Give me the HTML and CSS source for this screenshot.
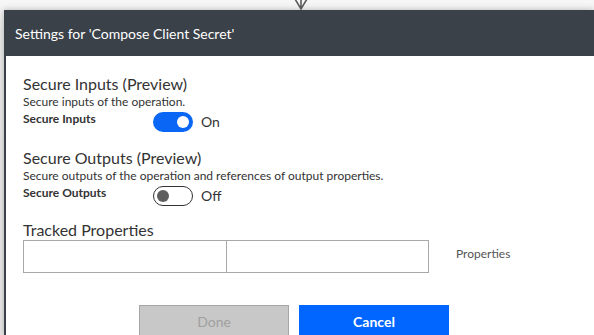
FILE: index.html
```html
<!DOCTYPE html>
<html>
<head>
<meta charset="utf-8">
<link rel="stylesheet" href="styles.css">
</head>
<body>
<div class="canvas">
  <svg class="connector" width="16" height="11" viewBox="0 0 16 11">
    <path d="M2 -1 L8 9 L14 -1 M8 -1 L8 9" fill="none" stroke="#5a5a5a" stroke-width="1.6"/>
  </svg>
  <div class="dialog">
    <div class="dialog-header">Settings for 'Compose Client Secret'</div>
    <div class="dialog-body">
      <section class="section">
        <div class="section-title">Secure Inputs (Preview)</div>
        <div class="section-desc">Secure inputs of the operation.</div>
        <div class="setting-row">
          <div class="setting-label">Secure Inputs</div>
          <div class="toggle toggle-on"><span class="knob"></span></div>
          <div class="toggle-text">On</div>
        </div>
      </section>
      <section class="section">
        <div class="section-title">Secure Outputs (Preview)</div>
        <div class="section-desc">Secure outputs of the operation and references of output properties.</div>
        <div class="setting-row">
          <div class="setting-label">Secure Outputs</div>
          <div class="toggle toggle-off"><span class="knob"></span></div>
          <div class="toggle-text">Off</div>
        </div>
      </section>
      <section class="section tracked">
        <div class="section-title">Tracked Properties</div>
        <div class="tracked-row">
          <div class="kv-box">
            <div class="kv-cell kv-key"></div>
            <div class="kv-cell"></div>
          </div>
          <div class="kv-hint">Properties</div>
        </div>
      </section>
      <div class="actions">
        <button class="btn btn-done">Done</button>
        <button class="btn btn-cancel">Cancel</button>
      </div>
    </div>
  </div>
</div>
</body>
</html>
```
FILE: styles.css
```css
html, body {
  margin: 0;
  padding: 0;
  width: 594px;
  height: 335px;
  overflow: hidden;
}
body {
  background: linear-gradient(#f7f7f7, #e9e9e9 30px, #e6e6e6);
  font-family: Lato, "Open Sans", sans-serif;
  color: #333;
}
.canvas {
  position: relative;
  padding: 10px 0 0 4px;
}
.connector {
  position: absolute;
  left: 293px;
  top: 0;
}
.dialog {
  box-sizing: border-box;
  width: 590px;
  height: 325px;
  overflow: hidden;
  border-left: 2px solid #3a4149;
  background: #fff;
  box-shadow: 0 0 6px rgba(0, 0, 0, 0.25);
}
.dialog-header {
  height: 46px;
  background: #3a4149;
  color: #fff;
  font-size: 14px;
  display: flex;
  align-items: center;
  padding-left: 9px;
}
.dialog-body {
  padding: 18px 0 0 17px;
}
.section {
  margin-bottom: 16px;
}
.section-title {
  font-size: 16px;
  line-height: 20px;
}
.section-desc {
  font-size: 12px;
  line-height: 16px;
}
.setting-row {
  display: flex;
  align-items: flex-start;
}
.setting-label {
  width: 130px;
  font-size: 12px;
  line-height: 16px;
  font-weight: 700;
  margin-top: 1px;
}
.toggle {
  box-sizing: border-box;
  width: 40px;
  height: 20px;
  border-radius: 10px;
  margin-top: 2px;
  display: flex;
  align-items: center;
}
.toggle-on {
  background: #0a66f5;
  justify-content: flex-end;
  padding-right: 4px;
}
.toggle-on .knob {
  background: #fff;
}
.toggle-off {
  border: 1px solid #333;
  padding-left: 3px;
}
.toggle-off .knob {
  background: #5e5e5e;
}
.knob {
  width: 12px;
  height: 12px;
  border-radius: 50%;
}
.toggle-text {
  font-size: 14px;
  line-height: 20px;
  margin: 2px 0 0 8px;
}
.section.tracked {
  margin-top: -2px;
  margin-bottom: 0;
}
.tracked-row {
  display: flex;
  align-items: flex-start;
}
.kv-box {
  box-sizing: border-box;
  width: 406px;
  height: 33px;
  border: 1px solid #a8a8a8;
  display: grid;
  grid-template-columns: 203px 1fr;
}
.kv-key {
  border-right: 1px solid #a8a8a8;
}
.kv-hint {
  font-size: 12px;
  line-height: 16px;
  color: #555;
  margin: 6px 0 0 27px;
}
.actions {
  display: flex;
  gap: 10px;
  padding: 32px 0 0 116px;
}
.btn {
  box-sizing: border-box;
  width: 150px;
  height: 33px;
  font-family: Lato, "Open Sans", sans-serif;
  font-size: 14px;
  border-radius: 0;
  padding: 0;
}
.btn-done {
  background: #c8c8c8;
  border: 1px solid #a6a6a6;
  color: #a0a0a0;
}
.btn-cancel {
  background: #0066ff;
  border: 1px solid #0066ff;
  color: #fff;
  font-weight: 700;
}
```
